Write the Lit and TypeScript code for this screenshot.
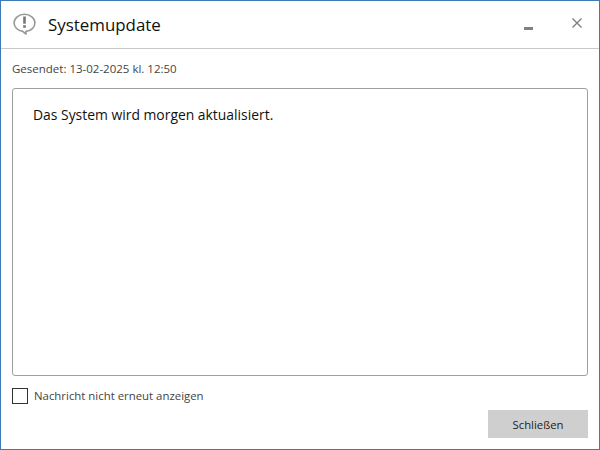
import { LitElement, html, css } from "lit";
import { customElement } from "lit/decorators.js";

@customElement("app-root")
export class AppRoot extends LitElement {
  static styles = css`
    :host {
      display: block;
      width: 600px;
      height: 450px;
      font-family: "Open Sans", "Noto Sans", sans-serif;
      color: #222;
    }
    .win {
      box-sizing: border-box;
      width: 600px;
      height: 450px;
      border: 1px solid #3d7ab8;
      background: #fff;
      display: flex;
      flex-direction: column;
    }
    .title {
      box-sizing: border-box;
      height: 48px;
      flex: none;
      display: flex;
      align-items: center;
      border-bottom: 1px solid #c8c8c8;
      padding: 0 17px 0 12px;
    }
    .logo { width: 24px; height: 24px; flex: none; margin-right: 11px; margin-top: -3px; }
    .title h1 {
      margin: 0;
      flex: 1;
      font-size: 16.9px;
      font-weight: 400;
      color: #111;
    }
    .min { width: 9px; height: 3px; background: #808080; margin-right: 39px; margin-top: 7px; }
    .close { width: 10px; height: 10px; margin-top: -3px; display: block; }
    .content {
      flex: 1;
      display: flex;
      flex-direction: column;
      padding: 0 11px 11px;
      min-height: 0;
    }
    .sent {
      font-size: 11.5px;
      line-height: 16px;
      color: #444;
      margin-top: 12px;
      margin-bottom: 11px;
    }
    .box {
      box-sizing: border-box;
      flex: 1;
      border: 1px solid #a0a0a0;
      border-radius: 3px;
      padding: 16px 20px;
      font-size: 13.9px;
      line-height: 20px;
      color: #111;
    }
    .check {
      display: flex;
      align-items: center;
      margin-top: 12px;
      gap: 6px;
    }
    .cb { box-sizing: border-box; width: 16px; height: 16px; border: 1px solid #333; background: #fff; }
    .check span { font-size: 11.4px; line-height: 16px; color: #444; }
    .actions { display: flex; justify-content: flex-end; margin-top: 6px; }
    button {
      width: 100px;
      height: 28px;
      border: 0;
      padding: 0;
      background: #cfcfcf;
      font: inherit;
      font-size: 11.3px;
      color: #222;
    }
  `;

  render() {
    return html`
      <div class="win">
        <div class="title">
          <svg class="logo" viewBox="0 0 24 24" fill="none">
            <path d="M11.5 3.3c-5.7 0-10.4 3.8-10.4 8.6 0 4.3 3.7 7.9 8.7 8.5.9.9 2 1.9 3.4 2.6-.3-.8-.4-1.7-.2-2.6 5.1-.5 8.9-4.1 8.9-8.5 0-4.8-4.7-8.6-10.4-8.6z" stroke="#989898" stroke-width="1.6" stroke-linejoin="round"/>
            <path d="M11.5 5.5v7.2" stroke="#767676" stroke-width="2.6"/>
            <path d="M11.5 14.2v2.6" stroke="#767676" stroke-width="2.6"/>
          </svg>
          <h1>Systemupdate</h1>
          <div class="min"></div>
          <svg class="close" viewBox="0 0 10 10"><path d="M.5.5l9 9M9.5.5l-9 9" stroke="#808080" stroke-width="1.4"/></svg>
        </div>
        <div class="content">
          <div class="sent">Gesendet: 13-02-2025 kl. 12:50</div>
          <div class="box">Das System wird morgen aktualisiert.</div>
          <label class="check"><div class="cb"></div><span>Nachricht nicht erneut anzeigen</span></label>
          <div class="actions"><button>Schließen</button></div>
        </div>
      </div>
    `;
  }
}
